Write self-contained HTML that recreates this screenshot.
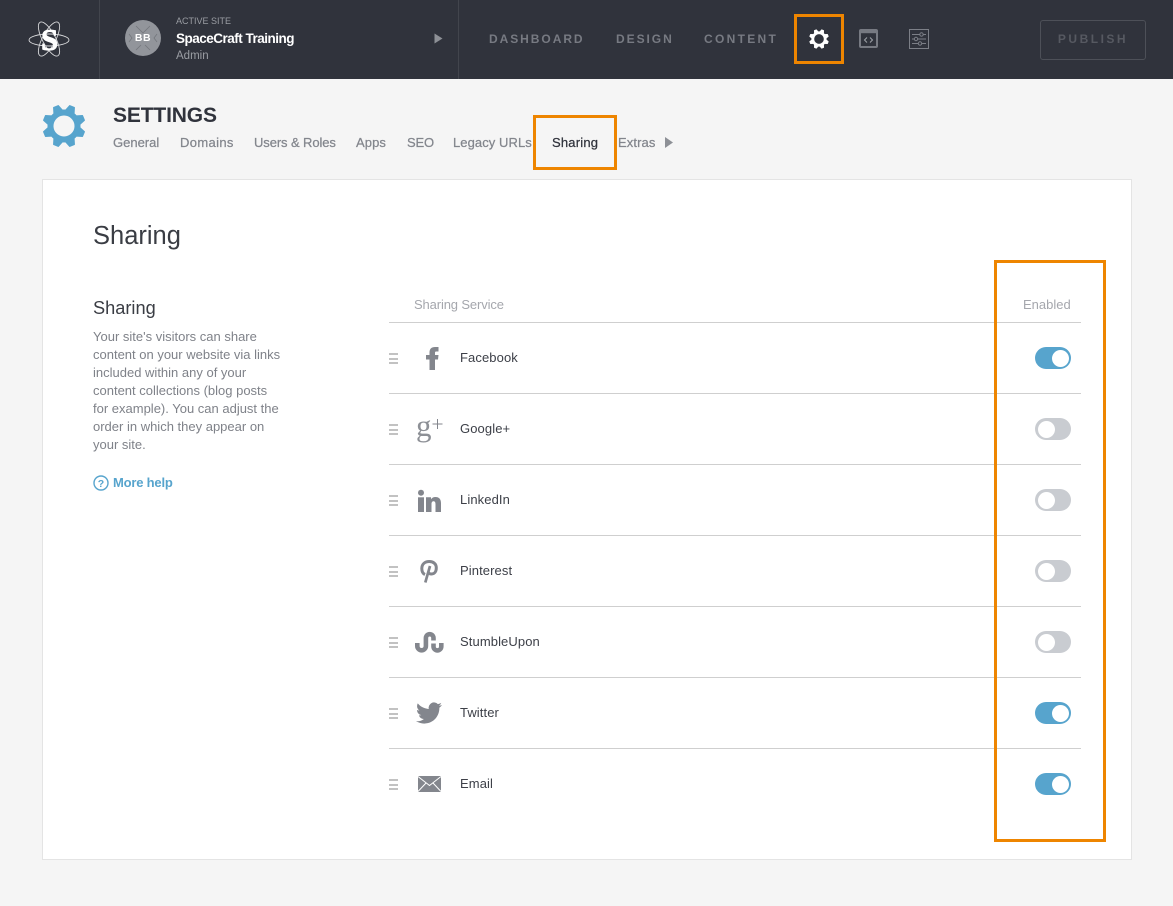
<!DOCTYPE html>
<html lang="en">
<head>
<meta charset="utf-8">
<title>Sharing Settings</title>
<style>
html,body{margin:0;padding:0;background:#f5f5f5}
body{position:relative;width:1173px;height:906px;overflow:hidden;font-family:"Liberation Sans",sans-serif}
.a,.t{position:absolute}
.t{white-space:nowrap}
.nav{font-size:12px;font-weight:bold;letter-spacing:1.95px;color:#777a82;top:31px;line-height:16px}
.tab{font-size:13px;color:#83868d;top:135px;line-height:16px;-webkit-text-stroke:.25px currentColor}
.line{position:absolute;left:389px;width:692px;height:1px;background:#cfcfcf}
.name{position:absolute;left:460px;font-size:13px;line-height:16px;color:#3d4048;white-space:nowrap;letter-spacing:.1px}
.tog{position:absolute;left:1035px;width:36px;height:22px;border-radius:11px;background:#c9ccd1}
.tog i{position:absolute;top:2.5px;left:2.5px;width:17px;height:17px;border-radius:50%;background:#fff}
.tog.on{background:#57a4cd}
.tog.on i{left:16.5px}
.drag{position:absolute;left:389px;width:9px;height:7px;border-top:2px solid #c2c2c2;border-bottom:2px solid #c2c2c2}
.drag:after{content:"";position:absolute;left:0;right:0;top:2.5px;height:2px;background:#c2c2c2}
.desc{position:absolute;left:93px;top:328px;font-size:13px;line-height:18px;color:#7f8289;white-space:nowrap}
.box{position:absolute;border:3.5px solid #ee8500;box-sizing:border-box}
svg{position:absolute;overflow:visible}
</style>
</head>
<body>
<svg width="0" height="0" style="left:0;top:0"><defs><g id="gear"><circle r="13.500" fill="none" stroke="currentColor" stroke-width="6"/><g fill="currentColor" stroke="currentColor" stroke-width="1.200" stroke-linejoin="round">
<polygon transform="rotate(22.5)" points="-4.600,-15 -2.500,-21 2.500,-21 4.600,-15"/>
<polygon transform="rotate(67.5)" points="-4.600,-15 -2.500,-21 2.500,-21 4.600,-15"/>
<polygon transform="rotate(112.5)" points="-4.600,-15 -2.500,-21 2.500,-21 4.600,-15"/>
<polygon transform="rotate(157.5)" points="-4.600,-15 -2.500,-21 2.500,-21 4.600,-15"/>
<polygon transform="rotate(202.5)" points="-4.600,-15 -2.500,-21 2.500,-21 4.600,-15"/>
<polygon transform="rotate(247.5)" points="-4.600,-15 -2.500,-21 2.500,-21 4.600,-15"/>
<polygon transform="rotate(292.5)" points="-4.600,-15 -2.500,-21 2.500,-21 4.600,-15"/>
<polygon transform="rotate(337.5)" points="-4.600,-15 -2.500,-21 2.500,-21 4.600,-15"/>
</g></g></defs></svg>

<div class="a" style="left:0;top:0;width:1173px;height:79px;background:#30333c"></div>
<div class="a" style="left:99px;top:0;width:1px;height:79px;background:#42454d"></div>
<div class="a" style="left:458px;top:0;width:1px;height:79px;background:#42454d"></div>

<svg style="left:28px;top:21px" width="42" height="36" viewBox="0 0 42 36" fill="none" stroke="#d8d9db" stroke-width=".9">
<ellipse cx="21" cy="19" rx="20" ry="6"/>
<ellipse cx="21" cy="18" rx="6.5" ry="19" transform="rotate(-28 21 18)"/>
<ellipse cx="21" cy="18" rx="6.5" ry="19" transform="rotate(28 21 18)"/>
</svg>
<div class="t" style="left:41px;top:25px;font-family:'Liberation Serif',serif;font-weight:bold;font-size:31px;line-height:30px;color:#fff;-webkit-text-stroke:.8px #fff">S</div>

<div class="a" style="left:125px;top:20px;width:36px;height:36px;border-radius:50%;background:#92959b"></div>
<svg style="left:125px;top:20px" width="36" height="36" viewBox="0 0 36 36" fill="none" stroke="#74777d" stroke-width=".8"><path d="M11 6L18 13L25 6M11 30L16 25M25 30L20 25M4 14L7 18L4 22M32 14L29 18L32 22"/></svg>
<div class="t" style="left:125px;top:31px;width:36px;text-align:center;font-size:10.5px;font-weight:bold;line-height:14px;color:#fff;letter-spacing:.5px">BB</div>
<div class="t" style="left:176px;top:15px;font-size:9px;line-height:13px;color:#9a9da3">ACTIVE SITE</div>
<div class="t" style="left:176px;top:30px;font-size:13.5px;line-height:17px;font-weight:bold;color:#fff;letter-spacing:-.5px">SpaceCraft Training</div>
<div class="t" style="left:176px;top:49px;font-size:11.5px;line-height:14px;color:#9a9da3">Admin</div>
<svg style="left:434px;top:33px" width="9" height="11" viewBox="0 0 9 11"><path d="M0.5 0.5L8.5 5.5L0.5 10.5Z" fill="#8d9096"/></svg>

<div class="t nav" style="left:489px">DASHBOARD</div>
<div class="t nav" style="left:616px">DESIGN</div>
<div class="t nav" style="left:704px;letter-spacing:2.3px">CONTENT</div>

<svg style="left:818.500px;top:38.500px;color:#fff" width="1" height="1" viewBox="0 0 1 1"><use href="#gear" transform="scale(.46)"/></svg>
<svg style="left:859px;top:29px" width="19" height="19" viewBox="0 0 19 19" fill="none">
<rect x="1" y="1" width="17" height="17" rx="1" stroke="#777a82" stroke-width="2"/>
<rect x="1" y="1" width="17" height="3.200" fill="#777a82"/>
<path d="M8 8.500L5.500 11L8 13.500M11 8.500L13.500 11L11 13.500" stroke="#a0a3a9" stroke-width="1"/>
</svg>
<svg style="left:909px;top:29px" width="20" height="20" viewBox="0 0 20 20" fill="none" stroke="#7c7f87" stroke-width="1">
<rect x="0.5" y="0.5" width="19" height="19"/>
<path d="M3 5.500H17M3 10H17M3 14.500H17"/>
<circle cx="12.500" cy="5.500" r="1.700" fill="#30333c"/>
<circle cx="7" cy="10" r="1.700" fill="#30333c"/>
<circle cx="11" cy="14.500" r="1.700" fill="#30333c"/>
</svg>

<div class="a" style="left:1040px;top:20px;width:106px;height:40px;box-sizing:border-box;border:1px solid #4d5058;border-radius:3px"></div>
<div class="t" style="left:1040px;top:31px;width:106px;text-align:center;font-size:12px;font-weight:bold;letter-spacing:2.5px;line-height:17px;color:#565961">PUBLISH</div>

<svg style="left:63.500px;top:125.500px;color:#57a4cd" width="1" height="1" viewBox="0 0 1 1"><use href="#gear"/></svg>
<div class="t" style="left:113px;top:103px;font-size:21px;line-height:26px;font-weight:bold;color:#30333c;letter-spacing:-.15px">SETTINGS</div>

<div class="t tab" style="left:113px">General</div>
<div class="t tab" style="left:180px;letter-spacing:.35px">Domains</div>
<div class="t tab" style="left:254px;letter-spacing:-.1px">Users &amp; Roles</div>
<div class="t tab" style="left:356px;letter-spacing:.1px">Apps</div>
<div class="t tab" style="left:407px;letter-spacing:-.2px">SEO</div>
<div class="t tab" style="left:453px;letter-spacing:.07px">Legacy URLs</div>
<div class="t tab" style="left:552px;color:#30333c;letter-spacing:.2px">Sharing</div>
<div class="t tab" style="left:618px;letter-spacing:.1px">Extras</div>
<svg style="left:665px;top:137px" width="8" height="11" viewBox="0 0 8 11"><path d="M0 0L8 5.500L0 11Z" fill="#8d9096"/></svg>

<div class="a" style="left:42px;top:179px;width:1090px;height:681px;box-sizing:border-box;background:#fff;border:1px solid #e4e4e4"></div>

<div class="t" style="left:93px;top:220px;font-size:25.500px;line-height:32px;color:#3a3d44">Sharing</div>
<div class="t" style="left:93px;top:297px;font-size:18.200px;line-height:23px;color:#3a3d44">Sharing</div>
<div class="desc">Your site's visitors can share<br>content on your website via links<br>included within any of your<br>content collections (blog posts<br>for example). You can adjust the<br>order in which they appear on<br>your site.</div>
<svg style="left:93px;top:475px" width="16" height="16" viewBox="0 0 16 16" fill="none"><circle cx="8" cy="8" r="7" stroke="#57a4cd" stroke-width="1.400"/><text x="8" y="11.800" text-anchor="middle" font-family="Liberation Sans" font-size="10.500" font-weight="bold" fill="#57a4cd">?</text></svg>
<div class="t" style="left:113px;top:474px;font-size:13px;line-height:17px;font-weight:bold;color:#57a4cd;letter-spacing:-.2px">More help</div>

<div class="t" style="left:414px;top:296px;font-size:13px;line-height:17px;color:#a5a7ad;letter-spacing:-.13px">Sharing Service</div>
<div class="t" style="left:1023px;top:296px;font-size:13px;line-height:17px;color:#a5a7ad">Enabled</div>

<div class="line" style="top:322px"></div>
<div class="line" style="top:393px"></div>
<div class="line" style="top:464px"></div>
<div class="line" style="top:535px"></div>
<div class="line" style="top:606px"></div>
<div class="line" style="top:677px"></div>
<div class="line" style="top:748px"></div>

<div class="drag" style="top:353px"></div>
<div class="drag" style="top:424px"></div>
<div class="drag" style="top:495px"></div>
<div class="drag" style="top:566px"></div>
<div class="drag" style="top:637px"></div>
<div class="drag" style="top:708px"></div>
<div class="drag" style="top:779px"></div>

<svg style="left:426px;top:347px" width="13" height="23" viewBox="0 0 13 23"><path d="M3.500 23V12.500H0V8H3.500V5.500C3.500 1.800 5.500 0 9 0H12.500V4.500H10C9.300 4.500 9 5 9 5.800V8H12.500L12 12.500H9V23Z" fill="#83868d"/></svg>
<div class="t" style="left:416px;top:410px;font-family:'Liberation Serif',serif;font-size:31px;line-height:32px;color:#8d9096">g</div>
<svg style="left:432px;top:419px" width="11" height="11" viewBox="0 0 11 11"><path d="M5.500 0V10M0.500 5H10.500" stroke="#83868d" stroke-width="1"/></svg>
<svg style="left:418px;top:490px" width="23" height="22" viewBox="0 0 23 22" fill="#83868d"><circle cx="3" cy="2.800" r="3"/><rect x="0" y="7.300" width="6" height="14.700"/><path d="M8 7.300H13V9.300C13.800 8 15.300 7 17.400 7C21.300 7 23 9.400 23 13.300V22H17.500V14.200C17.500 12.300 17 11.200 15.500 11.200C14 11.200 13.500 12.400 13.500 14.200V22H8Z"/></svg>
<svg style="left:420px;top:560px" width="18" height="23" viewBox="0 0 18 23"><path d="M5 14.500C2.500 13.500 1.800 11.200 1.800 8.500C1.800 4 5 1.500 9.300 1.500C13.500 1.500 16.300 4 16.300 7.700C16.300 11.500 14.500 14 11.500 14C9.800 14 8.800 13.300 8.300 12.200" fill="none" stroke="#83868d" stroke-width="3"/><path d="M10 6L5.300 22.500" fill="none" stroke="#83868d" stroke-width="2.700"/></svg>
<svg style="left:414px;top:631px" width="30" height="23" viewBox="0 0 30 23" fill="none" stroke="#83868d" stroke-width="4.600"><path d="M3.300 12V15A4.300 4.300 0 0 0 11.900 15V7A3.800 3.800 0 0 1 19.500 7V9.500"/><path d="M19.500 12.500V15.500A3.900 3.900 0 0 0 27.300 15.500V12"/></svg>
<svg style="left:416px;top:700px" width="26" height="26" viewBox="0 0 24 24"><path d="M23.953 4.570a10 10 0 01-2.825.775 4.958 4.958 0 002.163-2.723c-.951.555-2.005.959-3.127 1.184a4.920 4.920 0 00-8.384 4.482C7.690 8.095 4.067 6.130 1.640 3.162a4.822 4.822 0 00-.666 2.475c0 1.710.870 3.213 2.188 4.096a4.904 4.904 0 01-2.228-.616v.060a4.923 4.923 0 003.946 4.827 4.996 4.996 0 01-2.212.085 4.936 4.936 0 004.604 3.417 9.867 9.867 0 01-6.102 2.105c-.390 0-.779-.023-1.170-.067a13.995 13.995 0 007.557 2.209c9.053 0 13.998-7.496 13.998-13.985 0-.210 0-.420-.015-.630A9.935 9.935 0 0024 4.590z" fill="#83868d"/></svg>
<svg style="left:418px;top:776px" width="23" height="16" viewBox="0 0 23 16"><rect width="23" height="16" fill="#83868d"/><path d="M0 .5L11.500 9.500L23 .5M0 15.500L8 7M23 15.500L15 7" fill="none" stroke="#fff" stroke-width="1"/></svg>

<div class="name" style="top:350px">Facebook</div>
<div class="name" style="top:421px">Google+</div>
<div class="name" style="top:492px">LinkedIn</div>
<div class="name" style="top:563px">Pinterest</div>
<div class="name" style="top:634px">StumbleUpon</div>
<div class="name" style="top:705px">Twitter</div>
<div class="name" style="top:776px">Email</div>

<div class="tog on" style="top:347px"><i></i></div>
<div class="tog" style="top:418px"><i></i></div>
<div class="tog" style="top:489px"><i></i></div>
<div class="tog" style="top:560px"><i></i></div>
<div class="tog" style="top:631px"><i></i></div>
<div class="tog on" style="top:702px"><i></i></div>
<div class="tog on" style="top:773px"><i></i></div>

<div class="box" style="left:794px;top:14px;width:50px;height:50px"></div>
<div class="box" style="left:533px;top:115px;width:84px;height:55px"></div>
<div class="box" style="left:994px;top:260px;width:112px;height:582px"></div>
</body>
</html>
